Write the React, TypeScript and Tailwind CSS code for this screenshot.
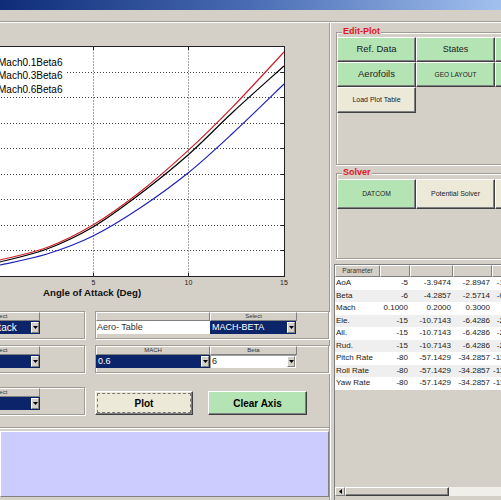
import React from 'react';

type Pt = [number, number];

// curve samples in plot coordinates (px inside the axes box)
const curves: { color: string; pts: Pt[] }[] = [
  {
    color: '#1f22b8',
    pts: [[-14, 222], [0, 219], [47, 208], [93, 190], [140, 162], [188, 127], [233, 87], [284, 38]],
  },
  {
    color: '#000000',
    pts: [[-14, 219], [0, 216], [47, 203], [93, 181], [140, 148], [188, 109], [233, 66], [284, 20]],
  },
  {
    color: '#cc2128',
    pts: [[-14, 217], [0, 214], [47, 201.5], [93, 179], [140, 146], [188, 104.6], [233, 60.6], [284, 6]],
  },
];

function smoothPath(pts: Pt[]) {
  let d = `M${pts[0][0]},${pts[0][1]}`;
  for (let i = 0; i < pts.length - 1; i++) {
    const p0 = pts[i - 1] || pts[i];
    const p1 = pts[i];
    const p2 = pts[i + 1];
    const p3 = pts[i + 2] || p2;
    const c1x = p1[0] + (p2[0] - p0[0]) / 6;
    const c1y = p1[1] + (p2[1] - p0[1]) / 6;
    const c2x = p2[0] - (p3[0] - p1[0]) / 6;
    const c2y = p2[1] - (p3[1] - p1[1]) / 6;
    d += ` C${c1x},${c1y} ${c2x},${c2y} ${p2[0]},${p2[1]}`;
  }
  return d;
}

const raised =
  'border border-t-white border-l-white border-r-[#404040] border-b-[#404040] shadow-[inset_-1px_-1px_0_#808080]';
const headCell = 'border border-t-white border-l-white border-r-[#808080] border-b-[#808080]';
const etched = 'border border-[#a09c94] shadow-[inset_1px_1px_0_#fff,1px_1px_0_#fff]';

const tableRows = [
  ['AoA', '-5', '-3.9474', '-2.8947', '-1.8421'],
  ['Beta', '-6', '-4.2857', '-2.5714', '-0.8571'],
  ['Mach', '0.1000', '0.2000', '0.3000', ''],
  ['Ele.', '-15', '-10.7143', '-6.4286', '-2.1429'],
  ['Ail.', '-15', '-10.7143', '-6.4286', '-2.1429'],
  ['Rud.', '-15', '-10.7143', '-6.4286', '-2.1429'],
  ['Pitch Rate', '-80', '-57.1429', '-34.2857', '-11.4286'],
  ['Roll Rate', '-80', '-57.1429', '-34.2857', '-11.4286'],
  ['Yaw Rate', '-80', '-57.1429', '-34.2857', '-11.4286'],
];
const colW = ['w-[45px]', 'w-[30px]', 'w-[43px]', 'w-[39px]', 'w-[34px]'];

function DropArrow() {
  return (
    <div className={`flex h-[11px] w-[8px] shrink-0 items-center justify-center bg-[#d4d0c8] ${headCell}`}>
      <svg width="5" height="3" viewBox="0 0 5 3">
        <path d="M0 0h5L2.5 3z" fill="#000" />
      </svg>
    </div>
  );
}

function Popup({ text, dark, className = '' }: { text: string; dark?: boolean; className?: string }) {
  return (
    <div
      className={`flex h-[13px] items-center justify-between pl-[2px] pr-[1px] text-[9px] leading-[13px] ${
        dark ? 'bg-[#0c2469] text-white' : 'bg-white text-[#222] shadow-[inset_1px_1px_0_#a0a0a0]'
      } ${className}`}
    >
      <span className="whitespace-nowrap">{text}</span>
      <DropArrow />
    </div>
  );
}

function Head({ text = '' }: { text?: string }) {
  return (
    <div className={`h-[9px] ${headCell} text-center text-[6px] leading-[7px] text-[#333]`}>{text}</div>
  );
}

// select widget on the far left, mostly cut off by the window edge
function SideSelect({ text }: { text: string }) {
  return (
    <div className={`-ml-[60px] h-full w-[145px] shrink-0 ${etched}`}>
      <div className="ml-[7px] w-[92px]">
        <div className={`h-[9px] ${headCell} pl-[10px] text-center text-[6px] leading-[7px] text-[#333]`}>Select</div>
        <div className="flex h-[13px] items-center justify-between bg-[#0c2469] pl-[2px] pr-[1px] text-[10px] leading-[13px] text-white">
          <span className="whitespace-nowrap">{text}</span>
          <DropArrow />
        </div>
      </div>
    </div>
  );
}

function GroupBox({ title, className = '', children }: { title: string; className?: string; children: React.ReactNode }) {
  return (
    <div
      className={`relative ml-[2px] w-[300px] border-t border-b border-l border-[#a09c94] shadow-[inset_1px_1px_0_#fff,0_1px_0_#fff] ${className}`}
    >
      <span className="absolute left-[5px] top-[-7px] bg-[#d4d0c8] px-[1px] text-[9px] font-bold leading-[11px] text-[#e3151c]">
        {title}
      </span>
      {children}
    </div>
  );
}

function Btn({ text, green, size }: { text: string; green?: boolean; size: string }) {
  return (
    <div
      className={`flex items-center justify-center whitespace-nowrap text-[#222] ${size} ${
        green ? 'bg-[#b4e4b4]' : 'bg-[#ece9d8]'
      } ${raised}`}
    >
      {text}
    </div>
  );
}

export default function App() {
  return (
    <div className="flex h-[500px] w-[501px] flex-col overflow-hidden bg-[#d4d0c8] font-['Liberation_Sans',Arial,sans-serif]">
      {/* title bar */}
      <div className="h-[10px] shrink-0 bg-gradient-to-r from-[#0f2c78] via-[#4a6cb4] to-[#a3c1ee]" />
      <div className="h-[12px] shrink-0 border-b border-[#a09c94]" />
      <div className="h-px shrink-0 bg-white" />

      <div className="flex min-h-0 flex-1">
        {/* ── left: axes + controls ── */}
        <div className="flex w-[330px] shrink-0 flex-col border-r border-[#a09c94] shadow-[1px_0_0_#fff]">
          <div className="relative mt-[23px] h-[240px]">
            <svg width="300" height="240" className="block overflow-visible">
              <rect x="-20" y="0.5" width="304.5" height="230" fill="#fff" stroke="#222" strokeWidth="1" />
              {[1, 2, 3, 4, 5, 6, 7, 8].map((i) => {
                const y = Math.round((i * 230) / 9) + 0.5;
                return (
                  <g key={i}>
                    <line x1="-20" x2="284" y1={y} y2={y} stroke="#444" strokeDasharray="1 2" />
                    <line x1="281" x2="284.5" y1={y} y2={y} stroke="#222" />
                  </g>
                );
              })}
              {[93.5, 188.5].map((x) => (
                <g key={x}>
                  <line x1={x} x2={x} y1="0.5" y2="230.5" stroke="#444" strokeDasharray="1 2" />
                  <line x1={x} x2={x} y1="227" y2="230.5" stroke="#222" />
                  <line x1={x} x2={x} y1="0.5" y2="4" stroke="#222" />
                </g>
              ))}
              {curves.map((c) => (
                <path key={c.color} d={smoothPath(c.pts)} fill="none" stroke={c.color} strokeWidth="1.2" />
              ))}
              {[
                [93.5, '5'],
                [188.5, '10'],
                [284, '15'],
              ].map(([x, t]) => (
                <text key={t} x={x} y="238.5" fontSize="7" textAnchor="middle" fill="#222">
                  {t}
                </text>
              ))}
            </svg>
            <div className="absolute left-[-2px] top-[8px] w-[67px] bg-white pt-[1.5px] text-[10px] leading-[13.5px] text-black">
              <div>Mach0.1Beta6</div>
              <div>Mach0.3Beta6</div>
              <div>Mach0.6Beta6</div>
            </div>
          </div>
          <div className="mt-[1px] h-[12px] pl-[43px] text-[9.7px] font-bold leading-[12px] text-[#111]">
            Angle of Attack (Deg)
          </div>

          {/* row A */}
          <div className="mt-[12px] flex h-[28px]">
            <SideSelect text="Angle of Attack" />
            <div className={`ml-[10px] flex h-full flex-1 ${etched}`}>
              <div className="w-[114px]">
                <Head />
                <div className="h-[13px] bg-white pl-[1px] text-[9px] leading-[13px] text-[#333]">Aero- Table</div>
              </div>
              <div className="w-[87px]">
                <Head text="Select" />
                <Popup text="MACH-BETA" dark className="w-[86px]" />
              </div>
            </div>
          </div>

          {/* row B */}
          <div className="mt-[6px] flex h-[28px]">
            <SideSelect text="CL" />
            <div className={`ml-[10px] flex h-full flex-1 ${etched}`}>
              <div className="w-[114px]">
                <Head text="MACH" />
                <Popup text="0.6" dark />
              </div>
              <div className="w-[87px]">
                <Head text="Beta" />
                <Popup text="6" className="w-[86px]" />
              </div>
            </div>
          </div>

          {/* row C */}
          <div className="mt-[14px] flex h-[28px] items-end">
            <SideSelect text="CD" />
            <div className={`ml-[10px] h-[24px] w-[98px] bg-[#ece9d8] p-[1px] ${raised}`}>
              <div className="flex h-full items-center justify-center border border-dashed border-[#777] text-[10px] font-bold text-black">
                Plot
              </div>
            </div>
            <div
              className={`ml-[15px] flex h-[24px] w-[99px] items-center justify-center bg-[#b4e4b4] text-[10px] font-bold text-black ${raised}`}
            >
              Clear Axis
            </div>
          </div>

          <div className="mt-[12px] h-px bg-[#a09c94]" />
          <div className="h-px bg-white" />
          <div className="mt-[2px] h-[66px] border border-t-white border-l-white border-r-[#808080] border-b-[#808080] bg-[#ccccff]" />
        </div>

        {/* ── right: tool panel ── */}
        <div className="flex min-w-0 flex-1 flex-col pl-[4px]">
          <GroupBox title="Edit-Plot" className="mt-[9px] h-[133px] pt-[4px]">
            <div className="grid grid-cols-[79px_79px_79px] grid-rows-[25px_25px_26px]">
              <Btn text="Ref. Data" green size="text-[9.5px]" />
              <Btn text="States" green size="text-[9px]" />
              <Btn text="Inertia" green size="text-[9px]" />
              <Btn text="Aerofoils" green size="text-[9.5px]" />
              <Btn text="GEO LAYOUT" green size="text-[6.5px]" />
              <Btn text="Controls" green size="text-[9px]" />
              <Btn text="Load Plot Table" size="text-[7px]" />
            </div>
          </GroupBox>

          <GroupBox title="Solver" className="mt-[8px] h-[86px] pt-[5px]">
            <div className="grid grid-cols-[79px_79px_79px] grid-rows-[30px]">
              <Btn text="DATCOM" green size="text-[6.7px]" />
              <Btn text="Potential Solver" size="text-[7px]" />
              <Btn text="CFD Solver" size="text-[7px]" />
            </div>
          </GroupBox>

          {/* parameter table */}
          <div className="mt-[5px] flex min-h-0 flex-1 flex-col border-l border-t border-[#808080]">
            <div className="flex h-[12px] shrink-0">
              {colW.map((w, i) => (
                <div key={w} className={`${w} shrink-0 ${headCell} text-center text-[6.5px] leading-[10px] text-[#333]`}>
                  {i === 0 ? 'Parameter' : ''}
                </div>
              ))}
            </div>
            {tableRows.map((r, ri) => (
              <div
                key={r[0]}
                className={`flex h-[12.5px] shrink-0 text-[8px] leading-[12.5px] text-[#222] ${
                  ri % 2 === 0 ? 'bg-white' : 'bg-[#efefef]'
                }`}
              >
                {r.map((v, ci) => (
                  <div
                    key={ci}
                    className={`${colW[ci]} shrink-0 whitespace-nowrap ${ci === 0 ? 'pl-[1px]' : 'pr-[2px] text-right'}`}
                  >
                    {v}
                  </div>
                ))}
              </div>
            ))}
            <div className="flex-1" />
            {/* horizontal scrollbar */}
            <div className="mb-[4px] flex h-[9px] shrink-0">
              <div className={`flex w-[10px] items-center justify-center bg-[#d4d0c8] ${headCell}`}>
                <svg width="3" height="5" viewBox="0 0 3 5">
                  <path d="M3 0v5L0 2.5z" fill="#000" />
                </svg>
              </div>
              <div className={`w-[104px] bg-[#d4d0c8] ${raised}`} />
              <div className="flex-1 bg-[#f1efea]" />
            </div>
          </div>
        </div>
      </div>
    </div>
  );
}
